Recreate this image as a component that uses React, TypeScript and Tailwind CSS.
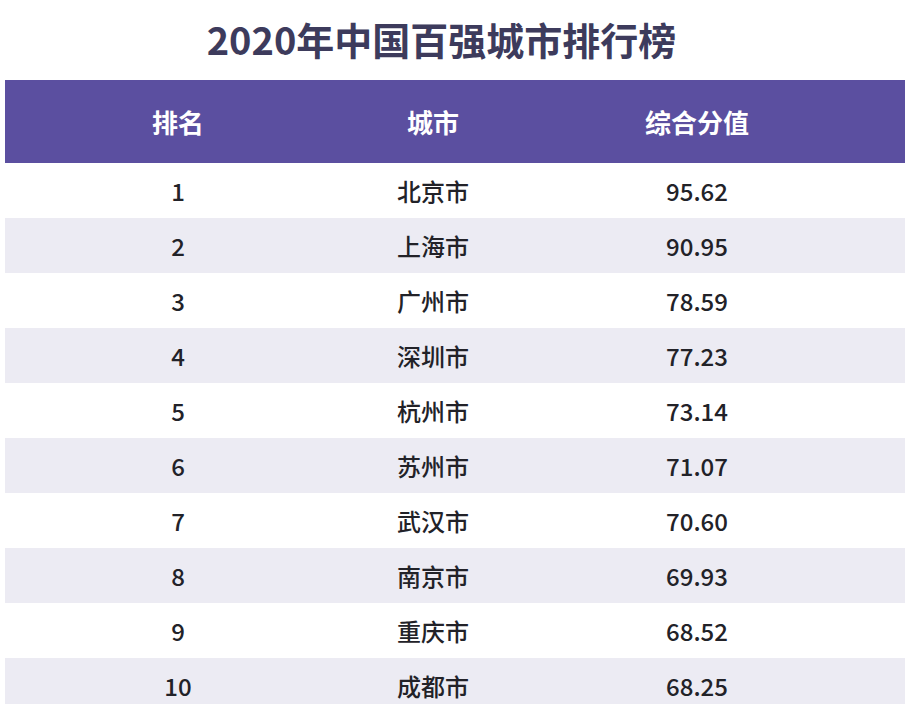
const rows = [
  { rank: "1", city: "北京市", score: "95.62" },
  { rank: "2", city: "上海市", score: "90.95" },
  { rank: "3", city: "广州市", score: "78.59" },
  { rank: "4", city: "深圳市", score: "77.23" },
  { rank: "5", city: "杭州市", score: "73.14" },
  { rank: "6", city: "苏州市", score: "71.07" },
  { rank: "7", city: "武汉市", score: "70.60" },
  { rank: "8", city: "南京市", score: "69.93" },
  { rank: "9", city: "重庆市", score: "68.52" },
  { rank: "10", city: "成都市", score: "68.25" },
];

export default function App() {
  return (
    <div
      className="w-[913px] h-[704px] overflow-hidden bg-white"
      style={{ fontFamily: '"Noto Sans CJK SC", "Noto Sans", sans-serif' }}
    >
      {/* Title */}
      <div className="h-[80px] flex items-center justify-center pr-[30px] pb-[2px]">
        <h1 className="text-[38px] font-bold text-[#3d3b5c] leading-none">
          2020年中国百强城市排行榜
        </h1>
      </div>

      {/* Table */}
      <div className="mx-[5px] w-[900px]">
        <div className="grid grid-cols-[346px_164px_364px_1fr] h-[83px] items-center bg-[#5b4fa0] text-white text-[26px] font-bold">
          <div className="text-center">排名</div>
          <div className="text-center">城市</div>
          <div className="text-center">综合分值</div>
          <div />
        </div>
        {rows.map((r, i) => (
          <div
            key={r.rank}
            className={`grid grid-cols-[346px_164px_364px_1fr] h-[55px] items-center text-[24px] font-medium text-[#222228] ${
              i % 2 === 1 ? "bg-[#ecebf3]" : "bg-white"
            }`}
          >
            <div className="text-center">{r.rank}</div>
            <div className="text-center">{r.city}</div>
            <div className="text-center">{r.score}</div>
            <div />
          </div>
        ))}
      </div>
    </div>
  );
}
